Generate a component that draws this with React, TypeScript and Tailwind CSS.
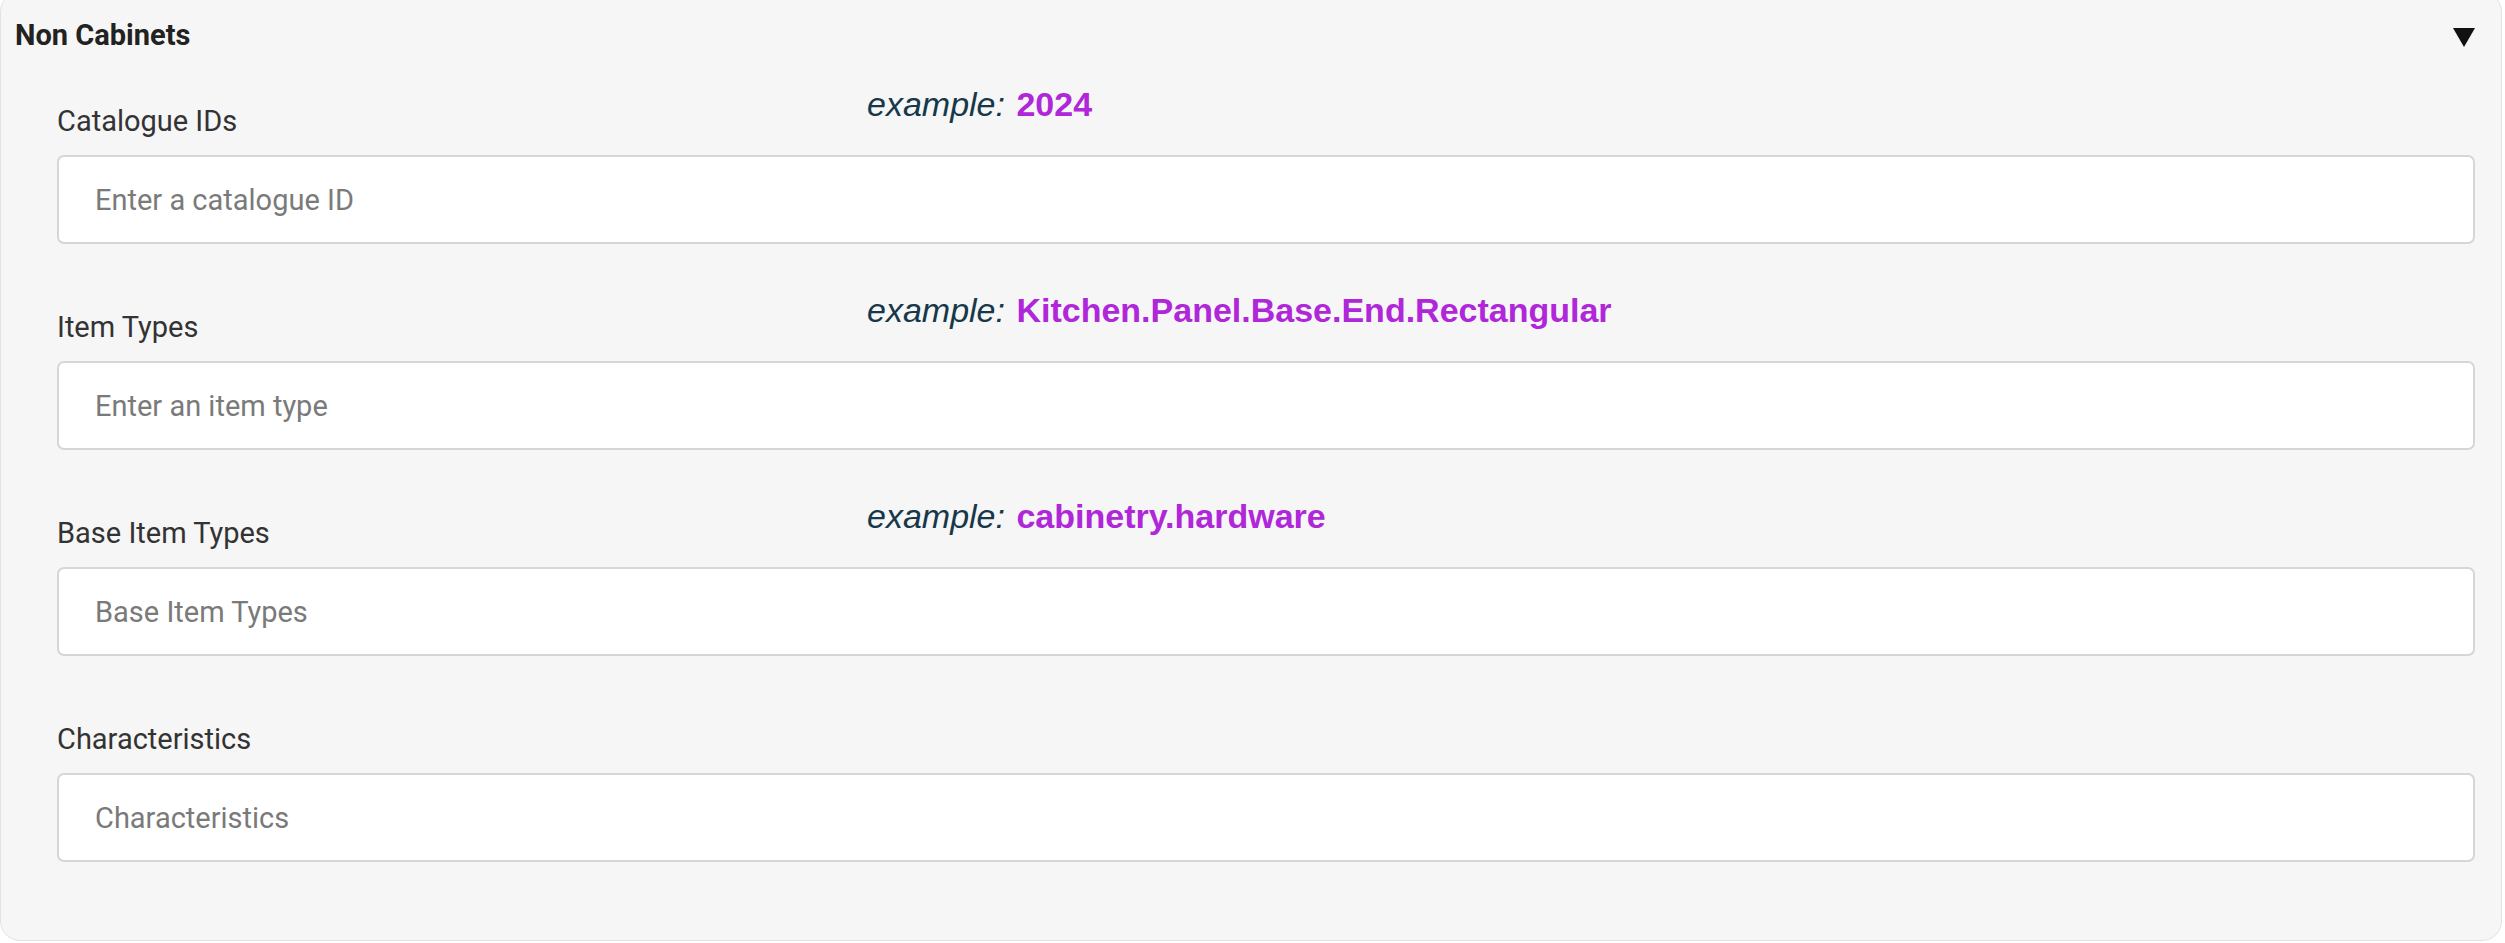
import React from 'react';

interface Field {
  label: string;
  placeholder: string;
  example?: string;
}

const fields: Field[] = [
  { label: 'Catalogue IDs', placeholder: 'Enter a catalogue ID', example: '2024' },
  { label: 'Item Types', placeholder: 'Enter an item type', example: 'Kitchen.Panel.Base.End.Rectangular' },
  { label: 'Base Item Types', placeholder: 'Base Item Types', example: 'cabinetry.hardware' },
  { label: 'Characteristics', placeholder: 'Characteristics' },
];

function FieldRow({ field }: { field: Field }) {
  return (
    <div className="mb-[50px] last:mb-0">
      <div className="flex items-start h-[54px]">
        <label className="w-[810px] mt-[12px] text-[29px] leading-[42px] text-[#333]">{field.label}</label>
        {field.example && (
          <div className="text-[34px] leading-[32px] font-['Liberation_Sans',Arial,sans-serif] whitespace-nowrap">
            <span className="italic text-[#17384a]">example:</span>{' '}
            <span className="font-bold text-[#b026d9] ml-[2px]">{field.example}</span>
          </div>
        )}
      </div>
      <input
        type="text"
        placeholder={field.placeholder}
        className="mt-[13px] block w-full h-[89px] bg-white border-2 border-[#d6d6d6] rounded-[7px] pl-[36px] text-[29px] text-[#333] placeholder:text-[#7a7a7a] outline-none"
      />
    </div>
  );
}

export default function App() {
  return (
    <div className="min-h-screen bg-white font-['Roboto',sans-serif]">
      <div className="w-[2502px] h-[949px] -mt-[8px] bg-[#f6f6f6] border border-[#e2e2e2] rounded-[20px] pl-[14px] pr-[26px]">
        <div className="flex justify-between items-start mt-[21px] h-[74px]">
          <h2 className="text-[29px] leading-[42px] font-bold text-[#222]">Non Cabinets</h2>
          <svg width="22" height="19" viewBox="0 0 22 19" className="mt-[14px]">
            <path d="M0 0 H22 L11 19 Z" fill="#111" />
          </svg>
        </div>
        <div className="pl-[42px]">
          {fields.map(f => (
            <FieldRow key={f.label} field={f} />
          ))}
        </div>
      </div>
    </div>
  );
}
